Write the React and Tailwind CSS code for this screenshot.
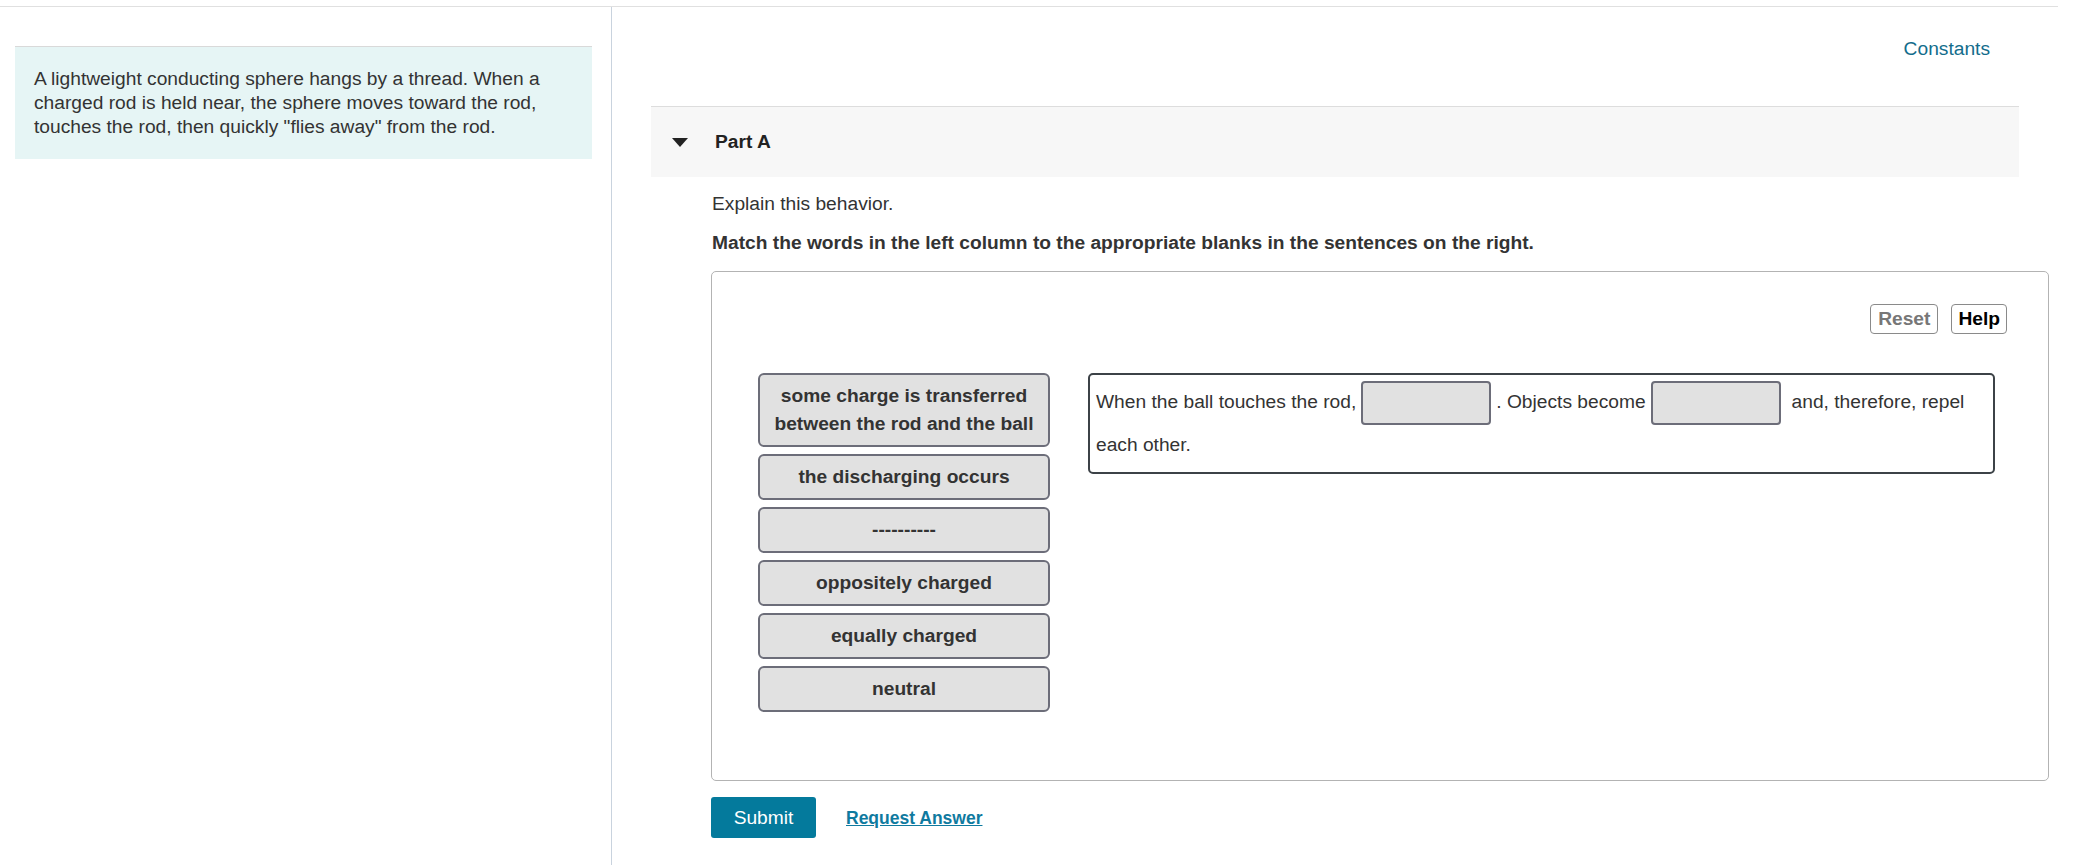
const tiles = [
  'some charge is transferred between the rod and the ball',
  'the discharging occurs',
  '----------',
  'oppositely charged',
  'equally charged',
  'neutral',
];

const Blank = () => (
  <span className="inline-block align-middle w-[130px] h-[44px] mx-[5px] bg-[#e1e1e1] border-2 border-[#6c6d79] rounded-[4px]" />
);

const App = () => {
  return (
    <div className="w-[2073px] h-[865px] overflow-hidden bg-white text-[#333] font-['Liberation_Sans',Arial,sans-serif] text-[19.2px] leading-[24px]">
      <div className="h-[6px]" />
      <div className="w-[2058px] h-[859px] border-t border-[#e0e0e0] flex">
        {/* left column */}
        <aside className="w-[612px] shrink-0 border-r border-[#c9d3de] pt-[39px]">
          <div className="ml-[15px] w-[577px] h-[113px] border-t border-[#d9d9d9] bg-[#e6f5f5] pt-[20px] pl-[19px] pr-[20px]">
            A lightweight conducting sphere hangs by a thread. When a charged rod is held near, the sphere moves toward the rod,
            touches the rod, then quickly "flies away" from the rod.
          </div>
        </aside>

        {/* right column */}
        <main className="flex-1 min-w-0 px-[39px]">
          <div className="pt-[30px] pr-[29px] text-right">
            <a className="text-[#136d8c] cursor-pointer">Constants</a>
          </div>

          <div className="mt-[45px] h-[71px] border-t border-[#dddddd] bg-[#f7f7f7] flex items-center pl-[21px]">
            <svg width="16" height="9" viewBox="0 0 16 9" className="shrink-0">
              <polygon points="0,0 16,0 8,9" fill="#222" />
            </svg>
            <span className="ml-[27px] font-bold text-[#222]">Part A</span>
          </div>

          <div className="pl-[60px]">
            <p className="mt-[15px] pl-[1px]">Explain this behavior.</p>
            <p className="mt-[15px] pl-[1px] font-bold">
              Match the words in the left column to the appropriate blanks in the sentences on the right.
            </p>

            <div className="mt-[16px] w-[1338px] h-[510px] border border-[#b3b3b3] rounded-[5px]">
              <div className="flex justify-end gap-[13px] pt-[32px] pr-[41px]">
                <button className="h-[30px] px-[7px] border border-[#8a8a8a] rounded-[4px] font-bold text-[#777] leading-[28px]">
                  Reset
                </button>
                <button className="h-[30px] px-[6px] border border-[#8a8a8a] rounded-[4px] font-bold text-black leading-[28px]">
                  Help
                </button>
              </div>

              <div className="flex items-start gap-[38px] mt-[39px] pl-[46px]">
                <div className="w-[292px] flex flex-col gap-[7px]">
                  {tiles.map((t) => (
                    <div
                      key={t}
                      className="border-2 border-[#6c6d79] bg-[#e1e1e1] rounded-[6px] py-[7px] px-[6px] leading-[28px] text-center font-bold text-[#333]"
                    >
                      {t}
                    </div>
                  ))}
                </div>

                <div className="w-[907px] border-2 border-[#3c4247] rounded-[5px] pt-[6px] pb-[7px] pl-[6px] pr-[6px] leading-[40px]">
                  <span>When the ball touches the rod,</span>
                  <Blank />
                  <span>. Objects become</span>
                  <Blank />
                  <span className="ml-[6px]">and, therefore, repel</span>{' '}
                  <span>each other.</span>
                </div>
              </div>
            </div>

            <div className="mt-[16px] flex items-center">
              <button className="h-[41px] w-[105px] rounded-[3px] bg-[#047a9c] text-white">Submit</button>
              <a className="ml-[30px] text-[17.5px] font-bold underline text-[#0f7a9f] cursor-pointer">Request Answer</a>
            </div>
          </div>
        </main>
      </div>
    </div>
  );
};

export default App;
